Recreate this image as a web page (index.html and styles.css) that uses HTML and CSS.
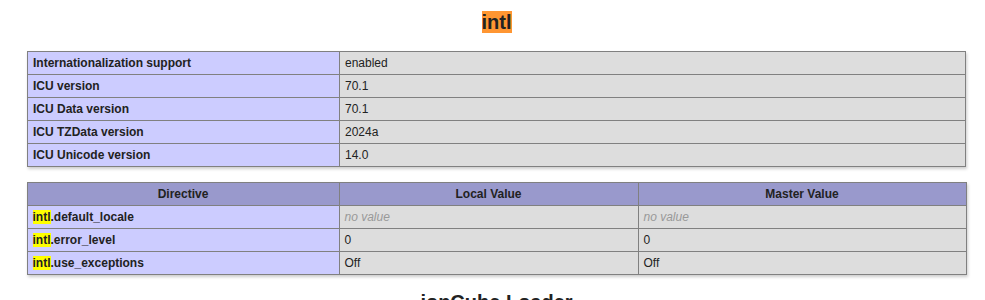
FILE: index.html
```html
<!DOCTYPE html>
<html>
<head>
<meta charset="utf-8">
<title>phpinfo</title>
<link rel="stylesheet" href="styles.css">
</head>
<body>
<div class="center">
<h2 class="first"><a name="module_intl"><mark class="active">intl</mark></a></h2>
<table>
<colgroup><col class="c-e"><col class="c-rest"></colgroup>
<tr><td class="e">Internationalization support </td><td class="v">enabled </td></tr>
<tr><td class="e">ICU version </td><td class="v">70.1 </td></tr>
<tr><td class="e">ICU Data version </td><td class="v">70.1 </td></tr>
<tr><td class="e">ICU TZData version </td><td class="v">2024a </td></tr>
<tr><td class="e">ICU Unicode version </td><td class="v">14.0 </td></tr>
</table>
<table>
<colgroup><col class="c-e"><col class="c-local"><col class="c-master"></colgroup>
<tr class="h"><th>Directive</th><th>Local Value</th><th>Master Value</th></tr>
<tr><td class="e"><mark class="hit">intl</mark>.default_locale</td><td class="v"><i>no value</i></td><td class="v"><i>no value</i></td></tr>
<tr><td class="e"><mark class="hit">intl</mark>.error_level</td><td class="v">0</td><td class="v">0</td></tr>
<tr><td class="e"><mark class="hit">intl</mark>.use_exceptions</td><td class="v">Off</td><td class="v">Off</td></tr>
</table>
<h2><a name="module_ioncube_loader">ionCube Loader</a></h2>
</div>
</body>
</html>
```

FILE: styles.css
```css
html, body {
  margin: 0;
  padding: 0;
}
body {
  background-color: #fff;
  color: #222;
  font-family: "Liberation Sans", Arial, sans-serif;
  overflow: hidden;
}
.center {
  text-align: center;
  padding-left: 8px;
  padding-top: 11px;
}
h2 {
  font-size: 20px;
  line-height: 23px;
  margin: 16px 0;
}
h2.first {
  margin-top: 0;
}
h2 a {
  color: inherit;
  text-decoration: none;
}
mark {
  color: inherit;
  padding: 0;
}
mark.active {
  background: #ff9632;
}
mark.hit {
  background: #ffff00;
}
table {
  border-collapse: collapse;
  border: 0;
  width: 939px;
  table-layout: fixed;
  box-shadow: 1px 2px 3px #ccc;
  margin: 15px auto;
  text-align: left;
}
h2 + table {
  margin-top: 17px;
}
.c-e { width: 312px; }
.c-local { width: 299px; }
.c-master { width: 328px; }
td, th {
  border: 1px solid #808080;
  font-size: 12px;
  line-height: 14px;
  vertical-align: baseline;
  padding: 4px 5px;
}
th {
  text-align: center;
}
.e {
  background-color: #ccf;
  font-weight: bold;
}
.h {
  background-color: #99c;
  font-weight: bold;
}
.v {
  background-color: #ddd;
  overflow-x: hidden;
  word-wrap: break-word;
}
.v i {
  color: #999;
}
```
